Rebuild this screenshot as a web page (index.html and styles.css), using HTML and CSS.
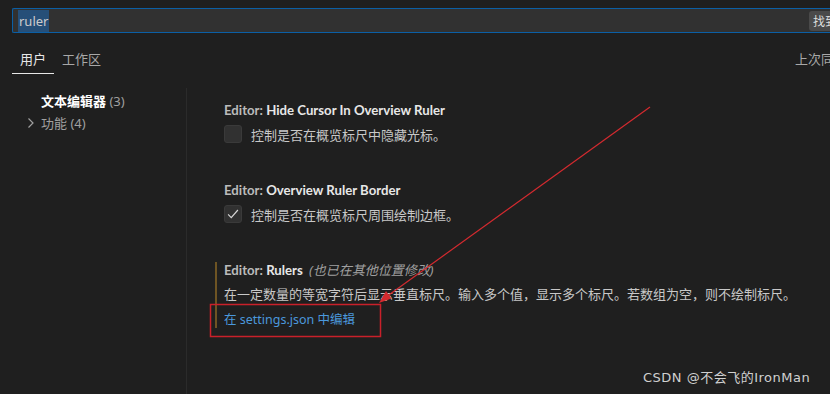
FILE: index.html
```html
<!DOCTYPE html>
<html lang="zh-CN">

<head>
    <meta charset="UTF-8">
    <meta name="viewport" content="width=device-width, initial-scale=1.0">
    <title>设置</title>
    <link rel="stylesheet" href="styles.css">
</head>

<body>

    <div class="search">
        <span class="search-text"><span class="selected">ruler</span></span>
        <span class="search-count">找到 3 个设置</span>
    </div>

    <div class="tabs">
        <span class="tab active">用户</span>
        <span class="tab">工作区</span>
        <span class="sync">上次同步：刚刚</span>
    </div>

    <div class="layout">
        <div class="toc">
            <div class="toc-item current">文本编辑器 <span class="count">(3)</span></div>
            <div class="toc-item">
                <svg class="chevron" width="10" height="12" viewBox="0 0 10 12">
                    <path d="M2.5 1.5 L7 6 L2.5 10.5" fill="none" stroke="#a0a0a0" stroke-width="1.2" />
                </svg>
                功能 <span class="count">(4)</span>
            </div>
        </div>

        <div class="settings">
            <div class="setting">
                <div class="setting-title"><span class="category">Editor: </span>Hide Cursor In Overview Ruler</div>
                <div class="check-row">
                    <span class="checkbox"></span>
                    <span class="desc">控制是否在概览标尺中隐藏光标。</span>
                </div>
            </div>

            <div class="setting">
                <div class="setting-title"><span class="category">Editor: </span>Overview Ruler Border</div>
                <div class="check-row">
                    <span class="checkbox">
                        <svg width="18" height="18" viewBox="0 0 18 18">
                            <path d="M3.5 9.5 L7 13 L14.5 4.5" fill="none" stroke="#d8d8d8" stroke-width="1.3" />
                        </svg>
                    </span>
                    <span class="desc">控制是否在概览标尺周围绘制边框。</span>
                </div>
            </div>

            <div class="setting modified">
                <div class="setting-title"><span class="category">Editor: </span>Rulers <span class="also">(也已在其他位置修改)</span></div>
                <div class="desc block">在一定数量的等宽字符后显示垂直标尺。输入多个值，显示多个标尺。若数组为空，则不绘制标尺。</div>
                <a class="edit-link" href="#">在 settings.json 中编辑</a>
            </div>
        </div>
    </div>

    <!-- annotation drawn over the screenshot -->
    <svg class="markup" width="830" height="394" viewBox="0 0 830 394">
        <rect x="210.5" y="304.5" width="170" height="32" fill="none" stroke="#c9202a" stroke-width="1.5" />
        <line x1="650" y1="107" x2="386" y2="297" stroke="#d42a2f" stroke-width="1.2" />
        <polygon points="379,303 391.5,298.5 386,291" fill="#d42a2f" />
    </svg>

    <div class="watermark">CSDN @不会飞的IronMan</div>

</body>

</html>
```

FILE: styles.css
```css
body {
    margin: 0;
    padding: 0;
    background: #1f1f1f;
    color: #cccccc;
    font-family: "Noto Sans", "Noto Sans CJK SC", sans-serif;
    font-size: 13px;
    height: 394px;
    overflow: hidden;
    position: relative;
}

.search {
    margin: 8px 0 0 12px;
    height: 23px;
    border: 1px solid #0b5fa5;
    border-right: none;
    border-radius: 2px 0 0 2px;
    background: #313131;
    display: flex;
    align-items: center;
    padding-left: 5px;
    overflow: hidden;
}

.search-text {
    flex: 1;
    font-size: 13px;
    color: #cccccc;
}

.selected {
    background: #264f78;
    padding: 2px 1px 3px 1px;
}

.search-count {
    background: #4a4a4a;
    color: #dddddd;
    font-size: 12px;
    border-radius: 3px;
    padding: 1px 4px;
    white-space: nowrap;
    margin-right: -60px;
    flex-shrink: 0;
}

.tabs {
    margin-top: 12px;
    margin-left: 12px;
    display: flex;
    align-items: flex-start;
}

.tab {
    padding: 4px 8px 4px 8px;
    line-height: 20px;
    color: #a8a8a8;
    border-bottom: 1px solid transparent;
}

.tab.active {
    color: #e7e7e7;
    border-bottom: 1.5px solid #e7e7e7;
}

.sync {
    margin-left: auto;
    padding-top: 4px;
    line-height: 20px;
    color: #a8a8a8;
    white-space: nowrap;
    width: 35px;
    overflow: hidden;
}

.layout {
    display: flex;
    margin-top: 14px;
    height: 320px;
}

.toc {
    width: 186px;
    border-right: 1px solid #2b2b2b;
    padding-top: 2px;
}

.toc-item {
    position: relative;
    height: 22px;
    line-height: 22px;
    padding-left: 41px;
    color: #a0a0a0;
}

.toc-item.current {
    color: #ffffff;
    font-weight: bold;
}

.count {
    font-weight: normal;
    color: #a0a0a0;
}

.chevron {
    position: absolute;
    left: 26px;
    top: 5px;
}

.settings {
    padding: 12px 0 0 37px;
}

.setting {
    margin-bottom: 37px;
    position: relative;
}

.setting-title {
    line-height: 20px;
    font-family: Lato, "Noto Sans CJK SC", sans-serif;
    font-size: 13.2px;
    font-weight: bold;
    color: #e7e7e7;
    white-space: nowrap;
}

.category {
    color: #bbbbbb;
}

.also {
    font-family: "Noto Sans", "Noto Sans CJK SC", sans-serif;
    font-size: 13px;
    font-weight: normal;
    font-style: italic;
    color: #a0a0a0;
    margin-left: 3px;
}

.check-row {
    display: flex;
    align-items: center;
    margin-top: 5px;
    height: 18px;
}

.checkbox {
    width: 18px;
    height: 18px;
    box-sizing: border-box;
    background: #313131;
    border: 1px solid #3a3a3a;
    border-radius: 3px;
    margin-right: 9px;
    display: flex;
    align-items: center;
    justify-content: center;
}

.checkbox svg {
    display: block;
}

.desc {
    color: #c8c8c8;
    white-space: nowrap;
}

.desc.block {
    display: block;
    line-height: 20px;
    margin-top: 4px;
}

.edit-link {
    display: block;
    color: #4b98dc;
    text-decoration: none;
    line-height: 20px;
    margin-top: 6px;
    font-size: 12.5px;
}

.modified::before {
    content: "";
    position: absolute;
    left: -9px;
    top: 2px;
    width: 2px;
    height: 66px;
    background: #6e5423;
}

.markup {
    position: absolute;
    left: 0;
    top: 0;
    pointer-events: none;
}

.watermark {
    position: absolute;
    left: 643px;
    top: 369px;
    color: #d0d0d0;
    font-family: "DejaVu Sans", "Noto Sans CJK SC", sans-serif;
    font-size: 13px;
    letter-spacing: 0.5px;
    line-height: 18px;
    white-space: nowrap;
}
```
